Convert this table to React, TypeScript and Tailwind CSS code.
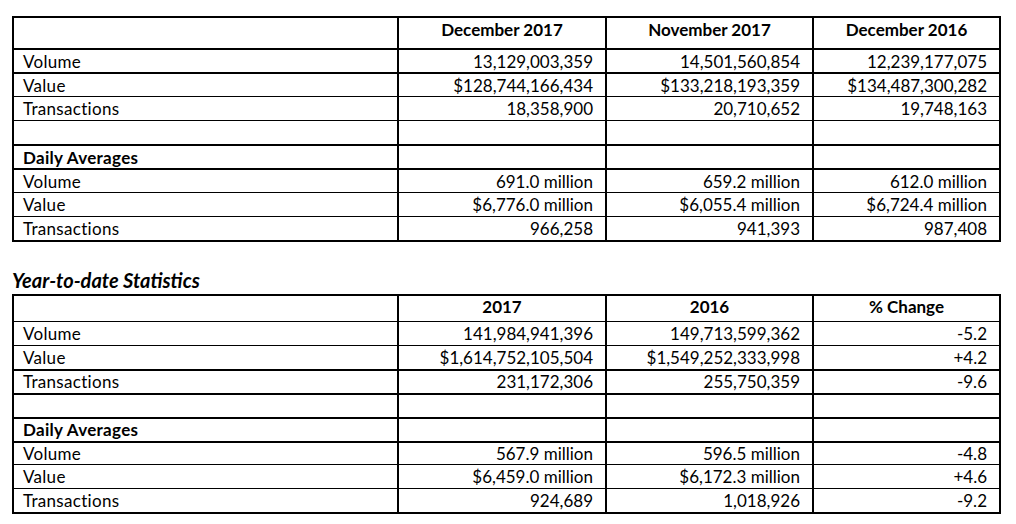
import React from "react";

type Row = { label: string; vals: string[]; bold?: boolean; bt: 1 | 2; h?: string };

const t1Header = ["December 2017", "November 2017", "December 2016"];
const t1Rows: Row[] = [
  { label: "Volume", vals: ["13,129,003,359", "14,501,560,854", "12,239,177,075"], bt: 2 },
  { label: "Value", vals: ["$128,744,166,434", "$133,218,193,359", "$134,487,300,282"], bt: 2 },
  { label: "Transactions", vals: ["18,358,900", "20,710,652", "19,748,163"], bt: 1 },
  { label: "", vals: ["", "", ""], bt: 1 },
  { label: "Daily Averages", vals: ["", "", ""], bt: 2, bold: true },
  { label: "Volume", vals: ["691.0 million", "659.2 million", "612.0 million"], bt: 2 },
  { label: "Value", vals: ["$6,776.0 million", "$6,055.4 million", "$6,724.4 million"], bt: 1 },
  { label: "Transactions", vals: ["966,258", "941,393", "987,408"], bt: 1 },
];

const t2Header = ["2017", "2016", "% Change"];
const t2Rows: Row[] = [
  { label: "Volume", vals: ["141,984,941,396", "149,713,599,362", "-5.2"], bt: 1 },
  { label: "Value", vals: ["$1,614,752,105,504", "$1,549,252,333,998", "+4.2"], bt: 1 },
  { label: "Transactions", vals: ["231,172,306", "255,750,359", "-9.6"], bt: 2 },
  { label: "", vals: ["", "", ""], bt: 2 },
  { label: "Daily Averages", vals: ["", "", ""], bt: 2, bold: true },
  { label: "Volume", vals: ["567.9 million", "596.5 million", "-4.8"], bt: 2, h: "h-[23px]" },
  { label: "Value", vals: ["$6,459.0 million", "$6,172.3 million", "+4.6"], bt: 1 },
  { label: "Transactions", vals: ["924,689", "1,018,926", "-9.2"], bt: 1 },
];

function Table({
  header,
  rows,
  headerH,
  headerPad,
  bodyPad,
}: {
  header: string[];
  rows: Row[];
  headerH: string;
  headerPad: string;
  bodyPad: string;
}) {
  return (
    <div className="ml-[12px] w-[989px] border-2 border-black">
      <div className={`grid grid-cols-[383px_208px_207px_187px] ${headerH}`}>
        <div />
        {header.map((h, i) => (
          <div key={i} className={`border-l-2 border-black text-center font-bold leading-[22px] ${headerPad}`}>
            {h}
          </div>
        ))}
      </div>
      {rows.map((r, i) => (
        <div
          key={i}
          className={`grid grid-cols-[383px_208px_207px_187px] ${r.h ?? "h-[24px]"} ${
            r.bt === 2 ? "border-t-2 border-black" : "border-t border-black"
          }`}
        >
          <div
            className={`flex items-center pl-[9px] leading-[22px] tracking-[0.3px] ${bodyPad} ${r.bold ? "font-bold" : ""}`}
          >
            {r.label}
          </div>
          {r.vals.map((v, j) => (
            <div
              key={j}
              className={`flex items-center justify-end border-l-2 border-black pr-[12px] leading-[22px] ${bodyPad}`}
            >
              {v}
            </div>
          ))}
        </div>
      ))}
    </div>
  );
}

export default function App() {
  return (
    <div className="w-[1016px] h-[524px] bg-white pt-[16px] text-[17px] text-black font-['Lato',sans-serif]">
      <Table header={t1Header} rows={t1Rows} headerH="h-[30px]" headerPad="pt-[1px]" bodyPad="pt-[1px]" />
      <div className="ml-[12px] mt-[26px] mb-[2px] h-[24px] text-[20px] font-bold italic leading-[24px]">
        Year-to-date Statistics
      </div>
      <Table header={t2Header} rows={t2Rows} headerH="h-[25px]" headerPad="pt-0" bodyPad="pt-0" />
    </div>
  );
}
